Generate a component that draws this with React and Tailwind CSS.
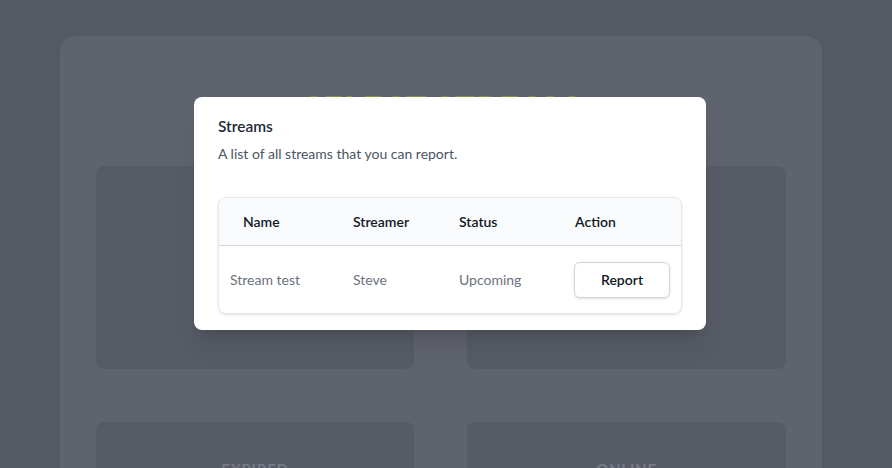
import React from "react";

const font = { fontFamily: '"Segoe UI", Lato, "Noto Sans", sans-serif' };

function Tile() {
  return <div className="h-[203px] rounded-lg bg-[#575b66]" />;
}

export default function App() {
  return (
    <div className="relative h-[468px] w-[892px] overflow-hidden bg-[#555964]" style={font}>
      <div className="pl-[60px] pt-[36px]">
        <div className="w-[762px] h-[460px] rounded-2xl bg-[#5f636e] px-[36px] pt-[52px]">
          <h1 className="text-center text-[34px] leading-[40px] font-extrabold tracking-wide text-[#80914f]">
            SELECT STREAM
          </h1>
          <div className="mt-[38px] grid grid-cols-[318px_319px] gap-x-[53px] gap-y-[53px]">
            <Tile />
            <Tile />
            <div className="h-[203px] rounded-lg bg-[#575b66] flex justify-center pt-[36px]">
              <span className="text-[15px] font-bold tracking-wider text-[#767a86]">EXPIRED</span>
            </div>
            <div className="h-[203px] rounded-lg bg-[#575b66] flex justify-center pt-[36px]">
              <span className="text-[15px] font-bold tracking-wider text-[#767a86]">ONLINE</span>
            </div>
          </div>
        </div>
      </div>

      <div className="absolute inset-0 flex justify-center pl-[8px] pt-[97px]">
        <div className="h-[233px] w-[512px] rounded-lg bg-white px-6 pt-[17px] shadow-xl">
          <h2 className="text-[15.5px] leading-6 font-semibold text-[#1f2937]">Streams</h2>
          <p className="mt-[6px] text-[14px] leading-5 text-[#4b5563]">A list of all streams that you can report.</p>
          <div className="mt-[33px] overflow-hidden rounded-lg border border-[#e5e7eb] shadow-sm">
            <div className="grid h-[48px] grid-cols-[122px_106px_116px_1fr] items-center border-b border-[#d1d5db] bg-[#f9fafb] text-[14px] font-semibold text-[#111827]">
              <div className="pl-6">Name</div>
              <div className="pl-3">Streamer</div>
              <div className="pl-3">Status</div>
              <div className="pl-3">Action</div>
            </div>
            <div className="grid h-[67px] grid-cols-[122px_106px_116px_1fr] items-center text-[14px] text-[#6b7280]">
              <div className="pl-[11px]">Stream test</div>
              <div className="pl-3">Steve</div>
              <div className="pl-3">Upcoming</div>
              <div className="pl-[11px]">
                <button className="h-[36px] w-[96px] rounded-md border border-[#d1d5db] bg-white text-[14px] font-semibold text-[#111827] shadow-sm">
                  Report
                </button>
              </div>
            </div>
          </div>
        </div>
      </div>
    </div>
  );
}
